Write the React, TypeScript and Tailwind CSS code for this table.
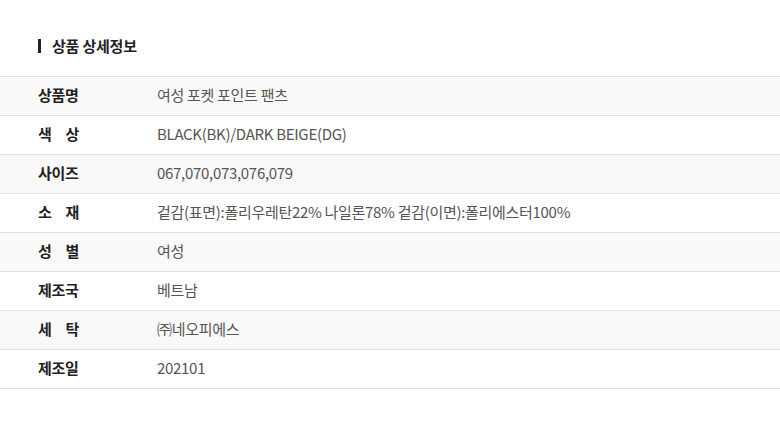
import React from 'react';

const rows: { label: string[]; value: string }[] = [
  { label: ['상품명'], value: '여성 포켓 포인트 팬츠' },
  { label: ['색', '상'], value: 'BLACK(BK)/DARK BEIGE(DG)' },
  { label: ['사이즈'], value: '067,070,073,076,079' },
  { label: ['소', '재'], value: '겉감(표면):폴리우레탄22% 나일론78% 겉감(이면):폴리에스터100%' },
  { label: ['성', '별'], value: '여성' },
  { label: ['제조국'], value: '베트남' },
  { label: ['세', '탁'], value: '㈜네오피에스' },
  { label: ['제조일'], value: '202101' },
];

export default function App() {
  return (
    <div className="w-[780px] h-[427px] pt-[38px] bg-white font-['Noto_Sans_CJK_KR',sans-serif]">
      <div className="flex items-center h-[16px] mb-[22px] pl-[38px]">
        <span className="w-[3px] h-[14px] bg-[#222] mr-[11px]" />
        <h2 className="text-[15px] leading-[16px] font-bold text-[#222] tracking-[-0.2px]">상품 상세정보</h2>
      </div>
      <div className="border-t border-[#e0e0e0]">
        {rows.map((r, i) => (
          <div
            key={i}
            className={`flex items-center h-[39px] pb-[1px] border-b border-[#e0e0e0] ${i % 2 === 0 ? 'bg-[#f9f9f9]' : 'bg-white'}`}
          >
            <div className="w-[157px] pl-[38px] shrink-0">
              <div className="w-[41px] flex justify-between text-[15px] font-bold text-[#222] tracking-[-0.3px]">
                {r.label.map((c, j) => (
                  <span key={j}>{c}</span>
                ))}
              </div>
            </div>
            <div className="text-[15px] text-[#555] tracking-[-0.3px]">{r.value}</div>
          </div>
        ))}
      </div>
    </div>
  );
}
